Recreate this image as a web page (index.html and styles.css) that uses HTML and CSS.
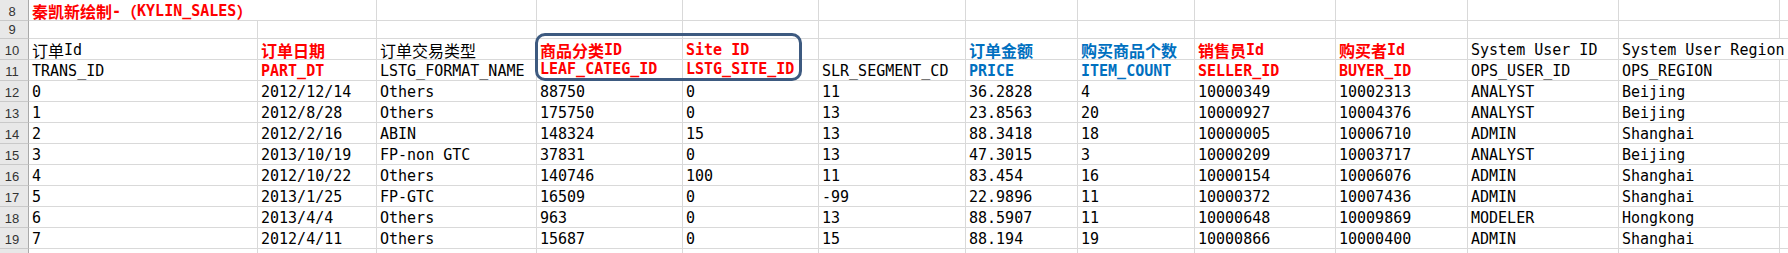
FILE: index.html
```html
<!DOCTYPE html>
<html lang="zh-CN">
<head>
<meta charset="utf-8">
<title>KYLIN_SALES</title>
<link rel="stylesheet" href="styles.css">
</head>
<body>
<div class="sheet">
  <div class="grid">
    <!-- row 8 -->
    <div class="rh">8</div>
    <div class="c span2 title"><span class="zh">秦凯新绘制</span>-<span class="zh">（</span>KYLIN_SALES<span class="zh">）</span></div>
    <div class="c"></div><div class="c"></div><div class="c"></div><div class="c"></div><div class="c"></div><div class="c"></div><div class="c"></div><div class="c"></div><div class="c"></div><div class="c"></div><div class="c"></div>
    <!-- row 9 -->
    <div class="rh">9</div>
    <div class="c"></div><div class="c"></div><div class="c"></div><div class="c"></div><div class="c"></div><div class="c"></div><div class="c"></div><div class="c"></div><div class="c"></div><div class="c"></div><div class="c"></div><div class="c"></div><div class="c"></div>
    <!-- row 10 -->
    <div class="rh">10</div>
    <div class="c"><span class="zh">订单</span>Id</div>
    <div class="c red"><span class="zh">订单日期</span></div>
    <div class="c"><span class="zh">订单交易类型</span></div>
    <div class="c red"><span class="zh">商品分类</span>ID</div>
    <div class="c red">Site ID</div>
    <div class="c"></div>
    <div class="c blue"><span class="zh">订单金额</span></div>
    <div class="c blue"><span class="zh">购买商品个数</span></div>
    <div class="c red"><span class="zh">销售员</span>Id</div>
    <div class="c red"><span class="zh">购买者</span>Id</div>
    <div class="c">System User ID</div>
    <div class="c span2">System User Region</div>
    <!-- row 11 -->
    <div class="rh">11</div>
    <div class="c">TRANS_ID</div>
    <div class="c red">PART_DT</div>
    <div class="c">LSTG_FORMAT_NAME</div>
    <div class="c red boxed">LEAF_CATEG_ID</div>
    <div class="c red boxed">LSTG_SITE_ID</div>
    <div class="c">SLR_SEGMENT_CD</div>
    <div class="c blue">PRICE</div>
    <div class="c blue">ITEM_COUNT</div>
    <div class="c red">SELLER_ID</div>
    <div class="c red">BUYER_ID</div>
    <div class="c">OPS_USER_ID</div>
    <div class="c">OPS_REGION</div>
    <div class="c"></div>
    <!-- row 12 -->
    <div class="rh">12</div>
    <div class="c">0</div><div class="c">2012/12/14</div><div class="c">Others</div><div class="c">88750</div><div class="c">0</div><div class="c">11</div><div class="c">36.2828</div><div class="c">4</div><div class="c">10000349</div><div class="c">10002313</div><div class="c">ANALYST</div><div class="c">Beijing</div><div class="c"></div>
    <!-- row 13 -->
    <div class="rh">13</div>
    <div class="c">1</div><div class="c">2012/8/28</div><div class="c">Others</div><div class="c">175750</div><div class="c">0</div><div class="c">13</div><div class="c">23.8563</div><div class="c">20</div><div class="c">10000927</div><div class="c">10004376</div><div class="c">ANALYST</div><div class="c">Beijing</div><div class="c"></div>
    <!-- row 14 -->
    <div class="rh">14</div>
    <div class="c">2</div><div class="c">2012/2/16</div><div class="c">ABIN</div><div class="c">148324</div><div class="c">15</div><div class="c">13</div><div class="c">88.3418</div><div class="c">18</div><div class="c">10000005</div><div class="c">10006710</div><div class="c">ADMIN</div><div class="c">Shanghai</div><div class="c"></div>
    <!-- row 15 -->
    <div class="rh">15</div>
    <div class="c">3</div><div class="c">2013/10/19</div><div class="c">FP-non GTC</div><div class="c">37831</div><div class="c">0</div><div class="c">13</div><div class="c">47.3015</div><div class="c">3</div><div class="c">10000209</div><div class="c">10003717</div><div class="c">ANALYST</div><div class="c">Beijing</div><div class="c"></div>
    <!-- row 16 -->
    <div class="rh">16</div>
    <div class="c">4</div><div class="c">2012/10/22</div><div class="c">Others</div><div class="c">140746</div><div class="c">100</div><div class="c">11</div><div class="c">83.454</div><div class="c">16</div><div class="c">10000154</div><div class="c">10006076</div><div class="c">ADMIN</div><div class="c">Shanghai</div><div class="c"></div>
    <!-- row 17 -->
    <div class="rh">17</div>
    <div class="c">5</div><div class="c">2013/1/25</div><div class="c">FP-GTC</div><div class="c">16509</div><div class="c">0</div><div class="c">-99</div><div class="c">22.9896</div><div class="c">11</div><div class="c">10000372</div><div class="c">10007436</div><div class="c">ADMIN</div><div class="c">Shanghai</div><div class="c"></div>
    <!-- row 18 -->
    <div class="rh">18</div>
    <div class="c">6</div><div class="c">2013/4/4</div><div class="c">Others</div><div class="c">963</div><div class="c">0</div><div class="c">13</div><div class="c">88.5907</div><div class="c">11</div><div class="c">10000648</div><div class="c">10009869</div><div class="c">MODELER</div><div class="c">Hongkong</div><div class="c"></div>
    <!-- row 19 -->
    <div class="rh">19</div>
    <div class="c">7</div><div class="c">2012/4/11</div><div class="c">Others</div><div class="c">15687</div><div class="c">0</div><div class="c">15</div><div class="c">88.194</div><div class="c">19</div><div class="c">10000866</div><div class="c">10000400</div><div class="c">ADMIN</div><div class="c">Shanghai</div><div class="c"></div>
    <!-- row 20 (only its top edge is in view) -->
    <div class="rh"></div>
    <div class="c"></div><div class="c"></div><div class="c"></div><div class="c"></div><div class="c"></div><div class="c"></div><div class="c"></div><div class="c"></div><div class="c"></div><div class="c"></div><div class="c"></div><div class="c"></div><div class="c"></div>
  </div>
  <div class="highlight"></div>
</div>
</body>
</html>
```

FILE: styles.css
```css
html, body {
  margin: 0;
  padding: 0;
  background: #ffffff;
  overflow: hidden;
}

.sheet {
  position: relative;
  width: 1788px;
  height: 253px;
  overflow: hidden;
}

.grid {
  display: grid;
  grid-template-columns: 29px 229px 119px 160px 146px 136px 147px 112px 117px 141px 132px 151px 161px 40px;
  grid-template-rows: 21px 18px repeat(12, 21px);
  font-family: "DejaVu Sans Mono", "Noto Sans CJK SC", monospace;
  font-size: 15px;
  color: #000000;
}

.rh {
  box-sizing: border-box;
  background: #e8e8e8;
  border-right: 1px solid #a9a9a9;
  border-bottom: 1px solid #c9c9c9;
  font-family: "Liberation Sans", Arial, sans-serif;
  font-size: 13px;
  color: #333333;
  display: flex;
  align-items: flex-end;
  justify-content: center;
  padding-right: 4px;
  padding-bottom: 1px;
  line-height: 15px;
}

.c {
  box-sizing: border-box;
  border-right: 1px solid #d9d9d9;
  border-bottom: 1px solid #d9d9d9;
  display: flex;
  align-items: flex-end;
  padding-left: 3px;
  line-height: 17px;
  white-space: nowrap;
  overflow: visible;
}

.c.boxed {
  padding-bottom: 2px;
}

.span2 {
  grid-column: span 2;
}

.zh {
  font-family: "Noto Sans CJK SC", sans-serif;
  font-size: 16px;
}

.red {
  color: #ff0000;
  font-weight: bold;
}

.blue {
  color: #0070c0;
  font-weight: bold;
}

.title {
  color: #ff0000;
  font-weight: bold;
}

.highlight {
  position: absolute;
  left: 535px;
  top: 33px;
  width: 267px;
  height: 48px;
  box-sizing: border-box;
  border: 3px solid #3d5a80;
  border-radius: 10px;
  pointer-events: none;
}
```
